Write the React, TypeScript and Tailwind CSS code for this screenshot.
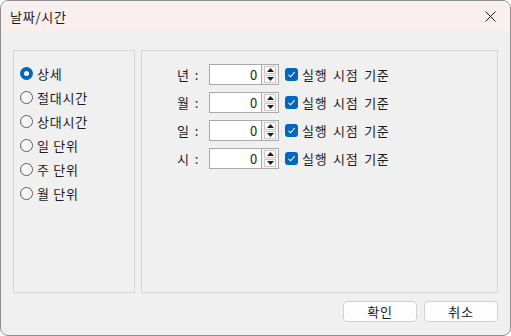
import { useState } from "react";

const FONT = { fontFamily: '"Noto Sans CJK KR", "Noto Sans", sans-serif' };

const radioItems = ["상세", "절대시간", "상대시간", "일 단위", "주 단위", "월 단위"];
const fields = ["년", "월", "일", "시"];

const Radio = ({ checked }: { checked: boolean }) =>
  checked ? (
    <span className="w-[13px] h-[13px] rounded-full bg-[#0067c0] flex items-center justify-center shrink-0">
      <span className="w-[5px] h-[5px] rounded-full bg-white" />
    </span>
  ) : (
    <span className="w-[13px] h-[13px] rounded-full border border-[#5d5d5d] bg-[#f6f6f6] shrink-0" />
  );

const Check = () => (
  <span className="w-[13px] h-[13px] rounded-[3px] bg-[#0067c0] flex items-center justify-center shrink-0">
    <svg width="9" height="9" viewBox="0 0 9 9" fill="none">
      <path d="M1.5 4.8 L3.6 6.8 L7.6 2.2" stroke="white" strokeWidth="1.1" />
    </svg>
  </span>
);

const Spinner = () => (
  <div className="flex flex-col w-[17px] h-[21px] border border-l-0 border-[#a9a9a9] bg-[#f3f3f3] px-[2px] py-[1px] gap-[1px]">
    <div className="flex-1 flex items-center justify-center border border-[#c9c9c9] bg-[#fdfdfd]">
      <svg width="7" height="4" viewBox="0 0 7 4"><path d="M0 4 L3.5 0 L7 4 Z" fill="#1b1b1b" /></svg>
    </div>
    <div className="flex-1 flex items-center justify-center border border-[#c9c9c9] bg-[#fdfdfd]">
      <svg width="7" height="4" viewBox="0 0 7 4"><path d="M0 0 L3.5 4 L7 0 Z" fill="#1b1b1b" /></svg>
    </div>
  </div>
);

export default function App() {
  const [selected, setSelected] = useState(0);

  return (
    <div className="w-[511px] h-[336px] bg-[#f0f0f0] border border-[#8f8f8f] rounded-lg overflow-hidden flex flex-col text-[13px] tracking-[0.75px] text-[#1b1b1b]" style={FONT}>
      {/* 타이틀바 */}
      <div className="h-[30px] bg-[#f9efef] flex items-center justify-between pl-[9px] pr-[14px] shrink-0">
        <span className="leading-none">날짜/시간</span>
        <svg width="11" height="11" viewBox="0 0 11 11">
          <path d="M0.5 0.5 L10.5 10.5 M10.5 0.5 L0.5 10.5" stroke="#1b1b1b" strokeWidth="1" />
        </svg>
      </div>

      {/* 본문 */}
      <div className="flex gap-[6px] pl-[12px] pr-[12px] pt-[19px] h-[262px] shrink-0">
        <div className="w-[122px] border border-[#d5d5d5] pt-[14px] pl-[6px] flex flex-col gap-[7px]">
          {radioItems.map((label, i) => (
            <button key={label} onClick={() => setSelected(i)} className="flex items-center gap-[4px] h-[17px] leading-none">
              <Radio checked={selected === i} />
              <span>{label}</span>
            </button>
          ))}
        </div>

        <div className="flex-1 border border-[#d5d5d5] pt-[13px] pl-[35px] flex flex-col gap-[7px]">
          {fields.map((f) => (
            <div key={f} className="flex items-center h-[21px]">
              <span className="w-[32px] flex items-center">
                <span>{f}</span>
                <span className="ml-[5px]">:</span>
              </span>
              <div className="w-[53px] h-[21px] border border-[#a9a9a9] bg-white flex items-center justify-end pr-[3px]">0</div>
              <Spinner />
              <div className="flex items-center gap-[4px] ml-[6px]">
                <Check />
                <span className="[word-spacing:2px]">실행 시점 기준</span>
              </div>
            </div>
          ))}
        </div>
      </div>

      {/* 하단 버튼 */}
      <div className="flex justify-end gap-[7px] pr-[12px] pt-[8px]">
        <button className="w-[74px] h-[21px] bg-[#fdfdfd] border border-[#d0d0d0] rounded-[4px] leading-none">확인</button>
        <button className="w-[74px] h-[21px] bg-[#fdfdfd] border border-[#d0d0d0] rounded-[4px] leading-none">취소</button>
      </div>
    </div>
  );
}
